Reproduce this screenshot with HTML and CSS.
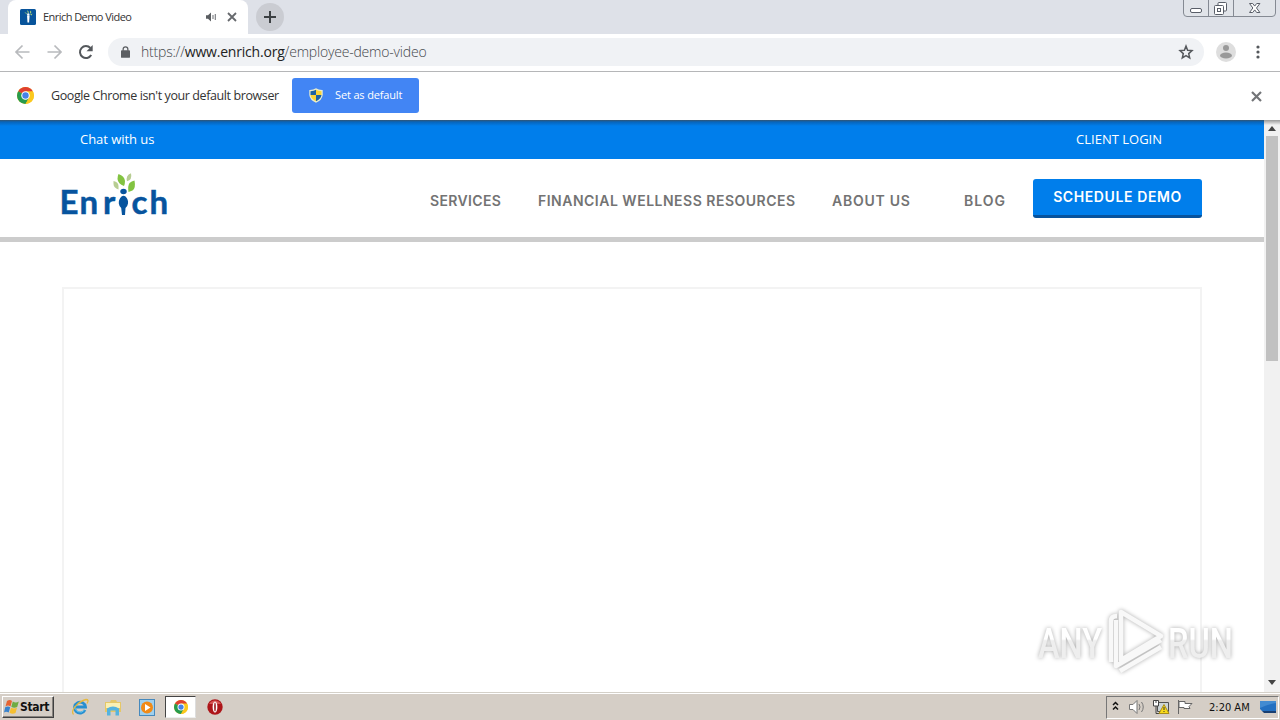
FILE: index.html
```html
<!DOCTYPE html>
<html lang="en">
<head>
<meta charset="utf-8">
<title>Enrich Demo Video</title>
<link rel="stylesheet" href="styles.css">
</head>
<body>
<svg class="defs" width="0" height="0">
  <symbol id="chrome" viewBox="0 0 16 16">
    <circle cx="8" cy="8" r="8" fill="#fbc81e"/>
    <path d="M8 8 1.1 4A8 8 0 0 1 14.9 4Z" fill="#df4030"/>
    <path d="M8 8 1.1 4A8 8 0 0 0 8 16L11.4 10Z" fill="#279b4d"/>
    <path d="M8 4h6.9A8 8 0 0 1 8 16l3.4-6Z" fill="#fbc81e"/>
    <circle cx="8" cy="8" r="4" fill="#fff"/><circle cx="8" cy="8" r="3" fill="#4682e8"/>
  </symbol>
</svg>
<header class="tabs">
  <div class="tab">
    <svg class="favicon" width="16" height="16" viewBox="0 0 16 16"><rect width="16" height="16" rx="1.5" fill="#08549b"/><path d="M7 6.500h2.600l-.5 7H7.500Z" fill="#fff"/><circle cx="8.300" cy="5.500" r="1.200" fill="#fff"/><path d="M7 1 9 3 8 4.500ZM10 1.500l1.500 1.500-1.500 2ZM4.300 3l2.200 1 .2 1.600ZM10 5.400l2.400-1-.8 2Z" fill="#a8cf78"/></svg>
    <span class="tab-title">Enrich Demo Video</span>
    <svg class="audio" width="12" height="12" viewBox="0 0 12 12"><path d="M1 4.200h2L6 1.500v9L3 7.800H1Z" fill="#5a5d61"/><path d="M8 4v4M10.300 3v6" stroke="#777a7e" stroke-width="1.100"/></svg>
    <svg class="tab-close" width="10" height="10" viewBox="0 0 10 10"><path d="m1 1 8 8m0-8L1 9" stroke="#66696d" stroke-width="1.800"/></svg>
  </div>
  <div class="new-tab"><svg width="12" height="12" viewBox="0 0 12 12"><path d="M6 0v12M0 6h12" stroke="#3c4043" stroke-width="2"/></svg></div>
  <svg class="window-buttons" width="94" height="18" viewBox="0 0 94 18"><path d="M.5 0v13q0 3.500 3.500 3.500h85q3.500 0 3.500-3.500V0M25.500 0v16.500M50.500 0v16.500" fill="#e1e4e9" stroke="#858a93"/><g fill="#fff" stroke="#595e68"><rect x="7.500" y="8.500" width="11" height="4" rx="1.500"/><rect x="35" y="2.500" width="8.500" height="8.500" rx="1"/><rect x="31.500" y="5.500" width="9" height="9" rx="1"/><rect x="34.500" y="8.500" width="3" height="3"/><path d="M66.500 3.500h3.200l2 2.600 2-2.600h3.200L73.500 8l3.400 4.500h-3.200l-2-2.600-2 2.600h-3.200L69.900 8Z"/></g></svg>
</header>
<div class="toolbar">
  <svg class="nav-icons" width="64" height="20" viewBox="0 0 64 20"><path d="M15.500 10H2.500M8.500 3.500 2 10l6.500 6.500M33.500 10h13M40.500 3.500 47 10l-6.500 6.500" fill="none" stroke="#b8babd" stroke-width="1.700"/></svg>
  <svg class="reload" width="16" height="16" viewBox="0 0 16 16"><path d="M13.200 11A6 6 0 1 1 12.400 4" fill="none" stroke="#54585c" stroke-width="2"/><path d="M14.700 1v6.200H8.500Z" fill="#54585c"/></svg>
  <div class="omnibox">
    <svg class="lock" width="9" height="12" viewBox="0 0 10 13"><rect y="4.500" width="10" height="8.500" rx="1" fill="#5b5e62"/><path d="M2.400 5V3.300a2.600 2.600 0 0 1 5.200 0V5" fill="none" stroke="#5b5e62" stroke-width="1.400"/></svg>
    <span class="url">https://<b>www.enrich.org</b>/employee-demo-video</span>
    <svg class="star" width="16" height="16" viewBox="0 0 16 16"><path d="m8 2 1.600 4.200 4.400.4-3.300 3 1 4.400L8 11.700 4.300 14l1-4.400L2 6.600l4.400-.4Z" fill="none" stroke="#55585c" stroke-width="1.500"/></svg>
  </div>
  <svg class="avatar" width="20" height="20" viewBox="0 0 20 20"><circle cx="10" cy="10" r="10" fill="#dedede"/><circle cx="10" cy="6" r="3" fill="#999"/><ellipse cx="10" cy="13.500" rx="6" ry="3" fill="#999"/></svg>
  <svg class="kebab" width="4" height="14" viewBox="0 0 4 14"><g fill="#55585c"><circle cx="2" cy="2" r="1.600"/><circle cx="2" cy="7" r="1.600"/><circle cx="2" cy="12" r="1.600"/></g></svg>
</div>
<div class="infobar">
  <svg class="chrome-logo" width="17" height="17"><use href="#chrome"/></svg>
  <span class="notice">Google Chrome isn't your default browser</span>
  <div class="default-btn">
    <svg width="14" height="15" viewBox="0 0 14 15"><path d="M7 .3Q10 2.300 13.700 2.100V7Q13 12.300 7 14.800 1 12.300 .3 7V2.100Q4 2.300 7 .3Z" fill="#e9edcf"/><path d="M7 1.800V7H1.500V3.200Q5 3 7 1.800ZM7 7h5.500Q12 11 7 13.300Z" fill="#1c62a3"/><path d="M7 1.800Q9 3 12.500 3.200V7H7ZM1.500 7H7v6.300Q2 11 1.500 7Z" fill="#f9d437"/></svg>
    <span class="default-label">Set as default</span>
  </div>
  <svg class="info-close" width="11" height="11" viewBox="0 0 11 11"><path d="m1 1 9 9m0-9-9 9" stroke="#737578" stroke-width="2.200"/></svg>
</div>
<div class="viewport">
  <main class="page">
    <div class="topbar"><span class="chat">Chat with us</span><span class="login">CLIENT LOGIN</span></div>
    <div class="site-nav">
      <svg class="logo" width="110" height="50" viewBox="0 0 110 50">
        <g class="logo-text"><text y="40" x="-1.500 18.500 42">Enr</text><text y="40" x="70.500 88.500">ch</text></g>
        <ellipse cx="62.500" cy="17.500" rx="3.200" ry="2.800" fill="#07549e"/><path d="M60.500 22.500q2-1.500 4 0 3 3 2.500 7-.5 3-2.500 4.500L64 41h-3l-.8-7q-2-1.500-2.400-4.500-.3-4 2.700-7Z" fill="#07549e"/>
        <path d="M57.500 0q6 2 6.500 7 0 3-1 5-6-2-6.500-7 0-3 1-5ZM73.500 6.500q1.500 8-2 10l-4 1.500q-1-6 1-9 2-2 5-2.500Z" fill="#82c341"/>
        <path d="M52.500 7q5 1 5 5v3.500q-5-2-5-5.500ZM70-.8q1.500 6.500-4 8-1.500-6 4-8Z" fill="#b7cd92"/>
      </svg>
      <nav class="links"><span class="l1">SERVICES</span><span class="l2">FINANCIAL WELLNESS RESOURCES</span><span class="l3">ABOUT US</span><span class="l4">BLOG</span></nav>
      <div class="demo">SCHEDULE DEMO</div>
    </div>
    <div class="video"></div>
  </main>
  <div class="scrollbar"><i class="up"></i><div class="thumb"></div><i class="down"></i></div>
</div>
<footer class="taskbar">
  <div class="start"><svg width="16" height="16" viewBox="0 0 16 16"><path d="M3 2q3-2 5 0L6.500 7.500Q4 5.500 1.500 7.500Z" fill="#e76432"/><path d="M8.800 2.500q3 1.800 6 0L13.200 8Q10 9.500 7.300 7.800Z" fill="#6fab42"/><path d="M1.200 8.300q2.800-1.800 5 0L4.700 13.500Q2 12 0 13.500Z" fill="#3983cd"/><path d="M7 8.800q3 1.600 6 0L11.500 14Q8.500 15.500 5.500 13.800Z" fill="#f5bf31"/></svg><span>Start</span></div>
  <svg class="ie" width="18" height="18" viewBox="0 0 18 18"><path d="M14 12A5.500 5.500 0 1 1 14.500 9H5" fill="none" stroke="#278fd0" stroke-width="2.800"/><path d="M13.500 12A5.300 5.300 0 0 1 4 8" fill="none" stroke="#62c4ee" stroke-width="1"/><path d="M2.500 16.500C-1 13 7 3.500 15 1.500q3.500 0 1 4" fill="none" stroke="#e7b93c" stroke-width="1.300"/></svg>
  <svg class="folder" width="16" height="17" viewBox="0 0 16 17"><path d="M0 3h5l1-2h5l1 2h4v10H0Z" fill="#e5c768"/><path d="M1 4h14v5H1Z" fill="#faf0b4"/><path d="M2 16.500V9.500q6-4 12 0v7h-3.500v-5h-5v5Z" fill="#55b3df"/></svg>
  <svg class="player" width="16" height="17" viewBox="0 0 16 17"><rect x=".5" y=".5" width="15" height="16" fill="#9fd0ee" stroke="#4689bd"/><circle cx="8" cy="8.500" r="6" fill="#f18a16"/><path d="m6 5 5.500 3.500L6 12Z" fill="#fff"/></svg>
  <div class="active-app"><svg width="14" height="14"><use href="#chrome"/></svg></div>
  <svg class="opera" width="16" height="16" viewBox="0 0 16 16"><circle cx="8" cy="8" r="7.700" fill="#ad1519"/><path d="M2 5a7 7 0 0 1 12 0Z" fill="#d65554"/><ellipse cx="8" cy="8" rx="2.400" ry="5.500" fill="#fff"/><ellipse cx="8" cy="8" rx=".8" ry="4.500" fill="#951015"/></svg>
  <div class="tray">
    <svg class="tray-icons" width="88" height="18" viewBox="0 0 88 18"><path d="m6 7 2.500-2.500L11 7M6 11.500 8.500 9l2.500 2.500" fill="none" stroke="#111" stroke-width="1.500"/><path d="M22.500 6.500H26l4-4v13l-4-4h-3.500Z" fill="#fff" stroke="#777"/><path d="M32 6q2 3 0 6m2.500-8q3.500 5 0 10" fill="none" stroke="#777"/><path d="M50.500 4.500h11v9h-11Z" fill="#ccd4d6" stroke="#505050"/><path d="M46.500 2.500h5V8h-5Z" fill="#fff" stroke="#444"/><path d="M49 2v3M49 8v7.500h5" fill="none" stroke="#444"/><path d="m57 6.500 5 9H52Z" fill="#f9da19" stroke="#a98c16"/><path d="M57 9v3m0 1v1" stroke="#333"/><path d="M71.500 2v14M72 3.500h6v2h7l-3 3 1 2h-6v-1h-5Z" fill="#fff" stroke="#666"/></svg>
    <span class="clock">2:20 AM</span>
    <svg class="desktop" width="16" height="14" viewBox="0 0 16 14"><path d="M0 1h16v10H2L0 9Z" fill="#2470c1"/><path d="M0 1h16v2Q8 4 0 8Z" fill="#438bd1"/><path d="M2 11h14v2H4Z" fill="#193f71"/></svg>
  </div>
</footer>
<svg class="watermark" width="216" height="72" viewBox="0 0 216 72">
  <defs><linearGradient id="fade" gradientUnits="userSpaceOnUse" x1="0" y1="16" x2="0" y2="52"><stop offset=".5" stop-color="#fff"/><stop offset=".55" stop-color="#eee"/></linearGradient></defs>
  <g class="wm-text" fill="url(#fade)"><text x="6" y="53" textLength="64" lengthAdjust="spacingAndGlyphs">ANY</text><text x="136" y="53" textLength="65" lengthAdjust="spacingAndGlyphs">RUN</text></g>
  <path d="M89 7 129 31 89 55ZM85 11q-6 0-6 5v41M84 15v46l45-26M88 66l41-24" class="wm-mark"/>
</svg>
</body>
</html>
```
FILE: styles.css
```css
* { box-sizing: border-box; }
body { margin: 0; width: 1280px; height: 720px; overflow: hidden; display: flex; flex-direction: column; background: #fff; font-family: "Open Sans", "Noto Sans", sans-serif; position: relative; }
svg { display: block; flex: none; overflow: visible; }
span { white-space: nowrap; }
.defs { position: absolute; }
.tabs { height: 34px; flex: none; background: #dee1e8; display: flex; padding-left: 8px; }
.tab { width: 240px; height: 34px; background: #fff; border-radius: 8px 8px 0 0; display: flex; align-items: center; padding-left: 12px; }
.tab-title { margin-left: 7px; width: 162px; padding-bottom: 2px; font-size: 11px; letter-spacing: -.55px; color: #333; }
.tab-close { margin-left: 10px; }
.new-tab { width: 28px; height: 28px; margin: 3px 0 0 8px; border-radius: 50%; background: #caccd2; display: grid; place-items: center; }
.window-buttons { margin-left: auto; margin-right: 3px; }
.toolbar { height: 38px; flex: none; border-bottom: 1px solid #b5b6b8; display: flex; align-items: center; padding-bottom: 1px; }
.nav-icons { margin-left: 14px; }
.omnibox { width: 1096px; height: 28px; margin-left: 14px; background: #f0f2f5; border-radius: 14px; display: flex; align-items: center; padding: 0 10px 0 13px; }
.lock { margin-bottom: 1px; }
.url { margin-left: 11px; padding-bottom: 2px; font-size: 14px; font-weight: 300; color: #44474b; letter-spacing: -.2px; }
.url b { font-weight: 400; color: #222; }
.star { margin-left: auto; }
.avatar { margin-left: 12px; }
.kebab { margin-left: 20px; }
.infobar { height: 48px; flex: none; display: flex; align-items: center; padding: 0 18px 1px 17px; }
.notice { margin-left: 17px; width: 241px; font-size: 12.5px; color: #333; letter-spacing: -.4px; padding-bottom: 1px; }
.default-btn { width: 127px; height: 35px; background: #4285f4; border-radius: 3px; color: #fff; display: flex; align-items: center; padding-left: 17px; }
.default-label { margin-left: 12px; padding-bottom: 2px; font-size: 11px; letter-spacing: -.15px; }
.info-close { margin-left: auto; margin-top: 1px; }
.viewport { height: 572px; flex: none; display: flex; }
.page { width: 1264px; height: 572px; overflow: hidden; }
.topbar { height: 39px; background: linear-gradient(#35546f, #0765bb 2px, #007eeb 6px); color: #fff; font-size: 13px; display: flex; justify-content: space-between; align-items: center; padding: 0 102px 1px 80px; }
.chat { letter-spacing: -.05px; }
.site-nav { height: 83px; border-bottom: 5px solid #ccc; display: flex; align-items: flex-start; padding-left: 61px; }
.logo { margin-top: 15px; }
.logo-text { font: 700 33px Lato, sans-serif; fill: #07549e; stroke: #07549e; stroke-width: .5px; }
.links { margin-top: 33px; margin-left: 259px; width: 603px; display: flex; font: 600 14px/18px Inter, sans-serif; letter-spacing: .5px; color: #737373; }
.l1 { width: 108px; letter-spacing: .35px; }
.l2 { width: 294px; }
.l3 { width: 132px; letter-spacing: .75px; }
.l4 { letter-spacing: 1px; }
.demo { width: 169px; height: 39px; margin-top: 20px; background: #007eeb; border-bottom: 3px solid #07539d; border-radius: 3px; font: 600 14px/36px Inter, sans-serif; letter-spacing: .6px; color: #fff; text-align: center; }
.video { height: 410px; width: 1140px; margin: 45px 0 0 62px; border: 2px solid #f3f3f3; }
.scrollbar { width: 16px; height: 572px; background: linear-gradient(#999, #f1f1f1 5px); display: flex; flex-direction: column; align-items: center; padding: 6px 0 7px; }
.up, .down { width: 0; height: 0; border: 4px solid transparent; }
.up { border-top: 0; border-bottom: 5px solid #444; }
.down { border-bottom: 0; border-top: 5px solid #444; margin-top: auto; }
.thumb { width: 12px; height: 225px; margin-top: 5px; background: #c1c1c1; }
.taskbar { height: 28px; flex: none; background: #d5cec6; border-top: 1px solid #d4d0c8; box-shadow: inset 0 1px #fff; display: flex; align-items: center; padding: 1px 1px 0 2px; }
.start { width: 52px; height: 22px; border: 1px solid; border-color: #fff #404040 #404040 #fff; box-shadow: inset -1px -1px #87837e; display: flex; align-items: center; padding-left: 1px; font: 700 12px "DejaVu Sans Condensed", sans-serif; color: #111; }
.start span { letter-spacing: -.3px; padding-bottom: 1px; }
.ie { margin-left: 17px; }
.folder { margin-left: 16px; }
.player { margin-left: 18px; }
.active-app { width: 31px; height: 22px; margin-left: 10px; background: #fff; border: 1px solid; border-color: #444 #ddd #eee #444; display: grid; place-items: center; }
.opera { margin-left: 11px; }
.tray { margin-left: auto; width: 173px; height: 23px; border: 1px solid; border-color: #777 #fff #fff #777; display: flex; align-items: center; }
.clock { width: 43px; margin-left: 14px; font: 11px "DejaVu Sans Condensed", sans-serif; color: #111; }
.desktop { margin-left: 8px; }
.watermark { position: absolute; left: 1032px; top: 605px; filter: drop-shadow(0 0 2px #0005); }
.wm-text { font: 500 43px Roboto, sans-serif; }
.wm-mark { fill: none; stroke: #f8f8f8; stroke-width: 4.5; stroke-linejoin: round; }
```
